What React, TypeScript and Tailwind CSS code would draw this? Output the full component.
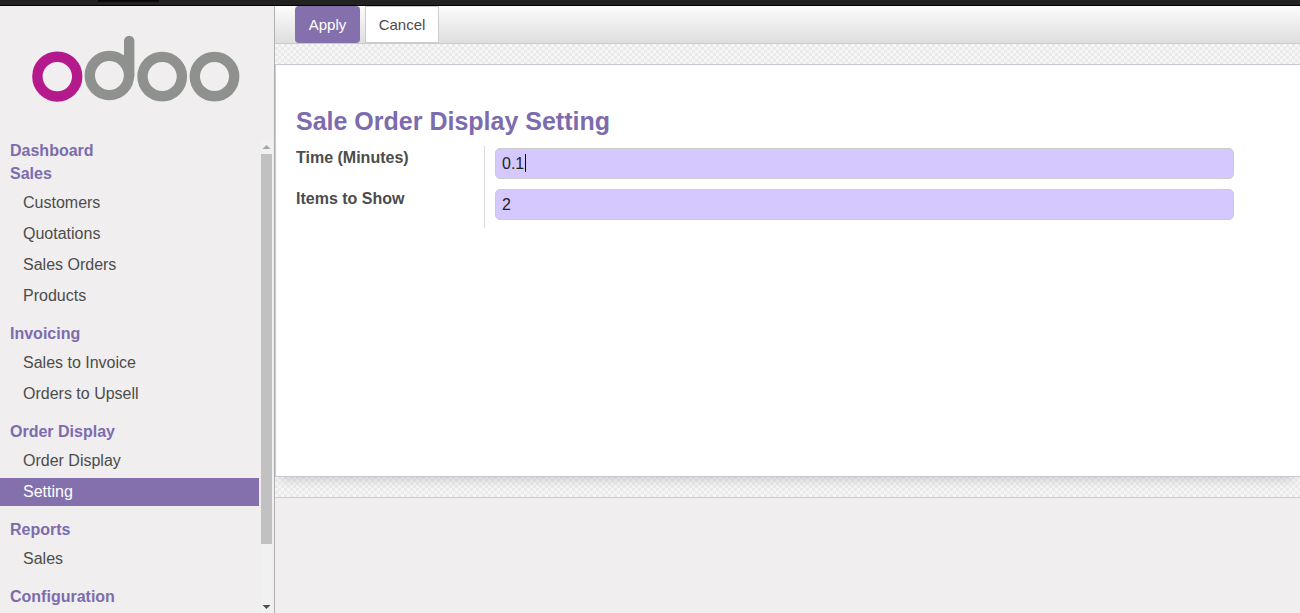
import React, { useState } from 'react';

type MenuItem = { label: string; active?: boolean };
type MenuSection = { title: string; items: MenuItem[] };

const sections: MenuSection[] = [
  {
    title: 'Sales',
    items: [{ label: 'Customers' }, { label: 'Quotations' }, { label: 'Sales Orders' }, { label: 'Products' }],
  },
  { title: 'Invoicing', items: [{ label: 'Sales to Invoice' }, { label: 'Orders to Upsell' }] },
  { title: 'Order Display', items: [{ label: 'Order Display' }, { label: 'Setting', active: true }] },
  { title: 'Reports', items: [{ label: 'Sales' }] },
  { title: 'Configuration', items: [] },
];

const headingClass = 'block px-[10px] text-[16px] leading-[22px] font-bold text-[#7c6cae]';
const inputClass =
  'block h-[31px] w-full rounded-[5px] border border-[#cccccc] bg-[#d4c8fe] px-[6px] text-[16px] text-[#222222] caret-transparent outline-none';
const checkerClass =
  'bg-[conic-gradient(#eaeaea_25%,#f6f6f6_0_50%,#eaeaea_0_75%,#f6f6f6_0)] bg-[length:6px_6px]';

function Logo() {
  return (
    <svg viewBox="0 0 208 67" className="h-[67px] w-[208px]" role="img" aria-label="odoo" fill="none" strokeWidth="10.4">
      <circle cx="25.3" cy="41.6" r="19.9" stroke="#b41a8c" />
      <g stroke="#8f918f">
        <circle cx="77.4" cy="40.5" r="19.6" />
        <path d="M97.2 6V40.5" strokeLinecap="round" />
        <circle cx="130.2" cy="41.6" r="19.7" />
        <circle cx="182.5" cy="41.6" r="19.7" />
      </g>
    </svg>
  );
}

function Sidebar() {
  return (
    <aside className="flex w-[275px] shrink-0 flex-col overflow-hidden border-r border-[#afafb6] bg-[#f0eeee]">
      <div className="flex h-[134px] shrink-0 pt-[29px] pl-8">
        <Logo />
      </div>
      <div className="flex min-h-0 flex-1">
        <nav className="mr-[2px] min-w-0 flex-1 overflow-hidden">
          <a href="#dashboard" className={headingClass}>
            Dashboard
          </a>
          {sections.map((section) => (
            <section key={section.title} className="mb-[13px] first-of-type:mt-[1px]">
              <h2 className={headingClass}>{section.title}</h2>
              <ul className="mt-[4px] flex flex-col gap-[3px]">
                {section.items.map((item) => (
                  <li key={item.label}>
                    <a
                      href="#menu"
                      aria-current={item.active ? 'page' : undefined}
                      className={
                        item.active
                          ? 'block bg-[#8370ad] pl-[23px] text-[16px] leading-[28px] text-white'
                          : 'block pl-[23px] text-[16px] leading-[28px] text-[#4c4c4c]'
                      }
                    >
                      {item.label}
                    </a>
                  </li>
                ))}
              </ul>
            </section>
          ))}
        </nav>
        <div aria-hidden="true" className="flex w-[13px] shrink-0 flex-col items-start bg-[#f1f1f1] pr-[2px]">
          <svg viewBox="0 0 11 14" className="h-[14px] w-[11px] shrink-0" fill="#a3a3a3">
            <path d="M1.500 9h8L5.500 5z" />
          </svg>
          <div className="h-[390px] w-full bg-[#c1c1c1]" />
          <svg viewBox="0 0 11 14" className="mt-auto h-[14px] w-[11px] shrink-0" fill="#505050">
            <path d="M1.500 6h8L5.500 10z" />
          </svg>
        </div>
      </div>
    </aside>
  );
}

export default function App() {
  const [time, setTime] = useState('0.1');
  const [items, setItems] = useState('2');

  return (
    <div className="flex h-screen flex-col overflow-hidden bg-[#f0eeee] font-['Liberation_Sans',Arial,sans-serif]">
      <header className="h-[6px] shrink-0 border-b border-black bg-[#222222]">
        <div className="ml-[98px] h-[2px] w-[61px] bg-[#080808]" />
      </header>
      <div className="flex min-h-0 flex-1">
        <Sidebar />
        <main className="min-w-0 flex-1">
          <div className="flex h-[38px] gap-[5px] border-b border-[#cacaca] bg-linear-to-b from-[#fcfcfc] to-[#dedede] pl-5">
            <button type="button" className="h-[37px] w-[65px] rounded-[4px] bg-[#8370ad] pt-[2px] text-[15px] text-white">
              Apply
            </button>
            <button type="button" className="h-[37px] w-[74px] border border-[#cccccc] bg-white pt-[2px] text-[15px] text-[#4c4c4c]">
              Cancel
            </button>
          </div>
          <div className={`${checkerClass} border-b border-[#cccccc] py-5`}>
            <form
              onSubmit={(e) => e.preventDefault()}
              className="min-h-[413px] border border-r-0 border-[#c8c8d3] bg-white pt-[40px] pr-[66px] pl-5 shadow-[0_9px_10px_-6px_rgba(0,0,0,0.15)]"
            >
              <h1 className="text-[25px] leading-[32px] font-bold text-[#7c6cae]">Sale Order Display Setting</h1>
              <div className="mt-[9px] grid grid-cols-[188px_1fr] text-[#4c4c4c]">
                <div className="flex flex-col gap-[10px] pt-[2px] text-[16px] leading-[19px] font-bold">
                  <label htmlFor="time" className="h-[31px]">
                    Time (Minutes)
                  </label>
                  <label htmlFor="items" className="h-[31px]">
                    Items to Show
                  </label>
                </div>
                <div className="flex flex-col gap-[10px] border-l border-[#dddddd] pt-[2px] pb-[8px] pl-[10px]">
                  <div className="relative">
                    <input id="time" className={inputClass} value={time} onChange={(e) => setTime(e.target.value)} />
                    <span aria-hidden="true" className="absolute top-[6px] left-[30px] h-[18px] w-px bg-black" />
                  </div>
                  <input id="items" className={inputClass} value={items} onChange={(e) => setItems(e.target.value)} />
                </div>
              </div>
            </form>
          </div>
        </main>
      </div>
    </div>
  );
}
